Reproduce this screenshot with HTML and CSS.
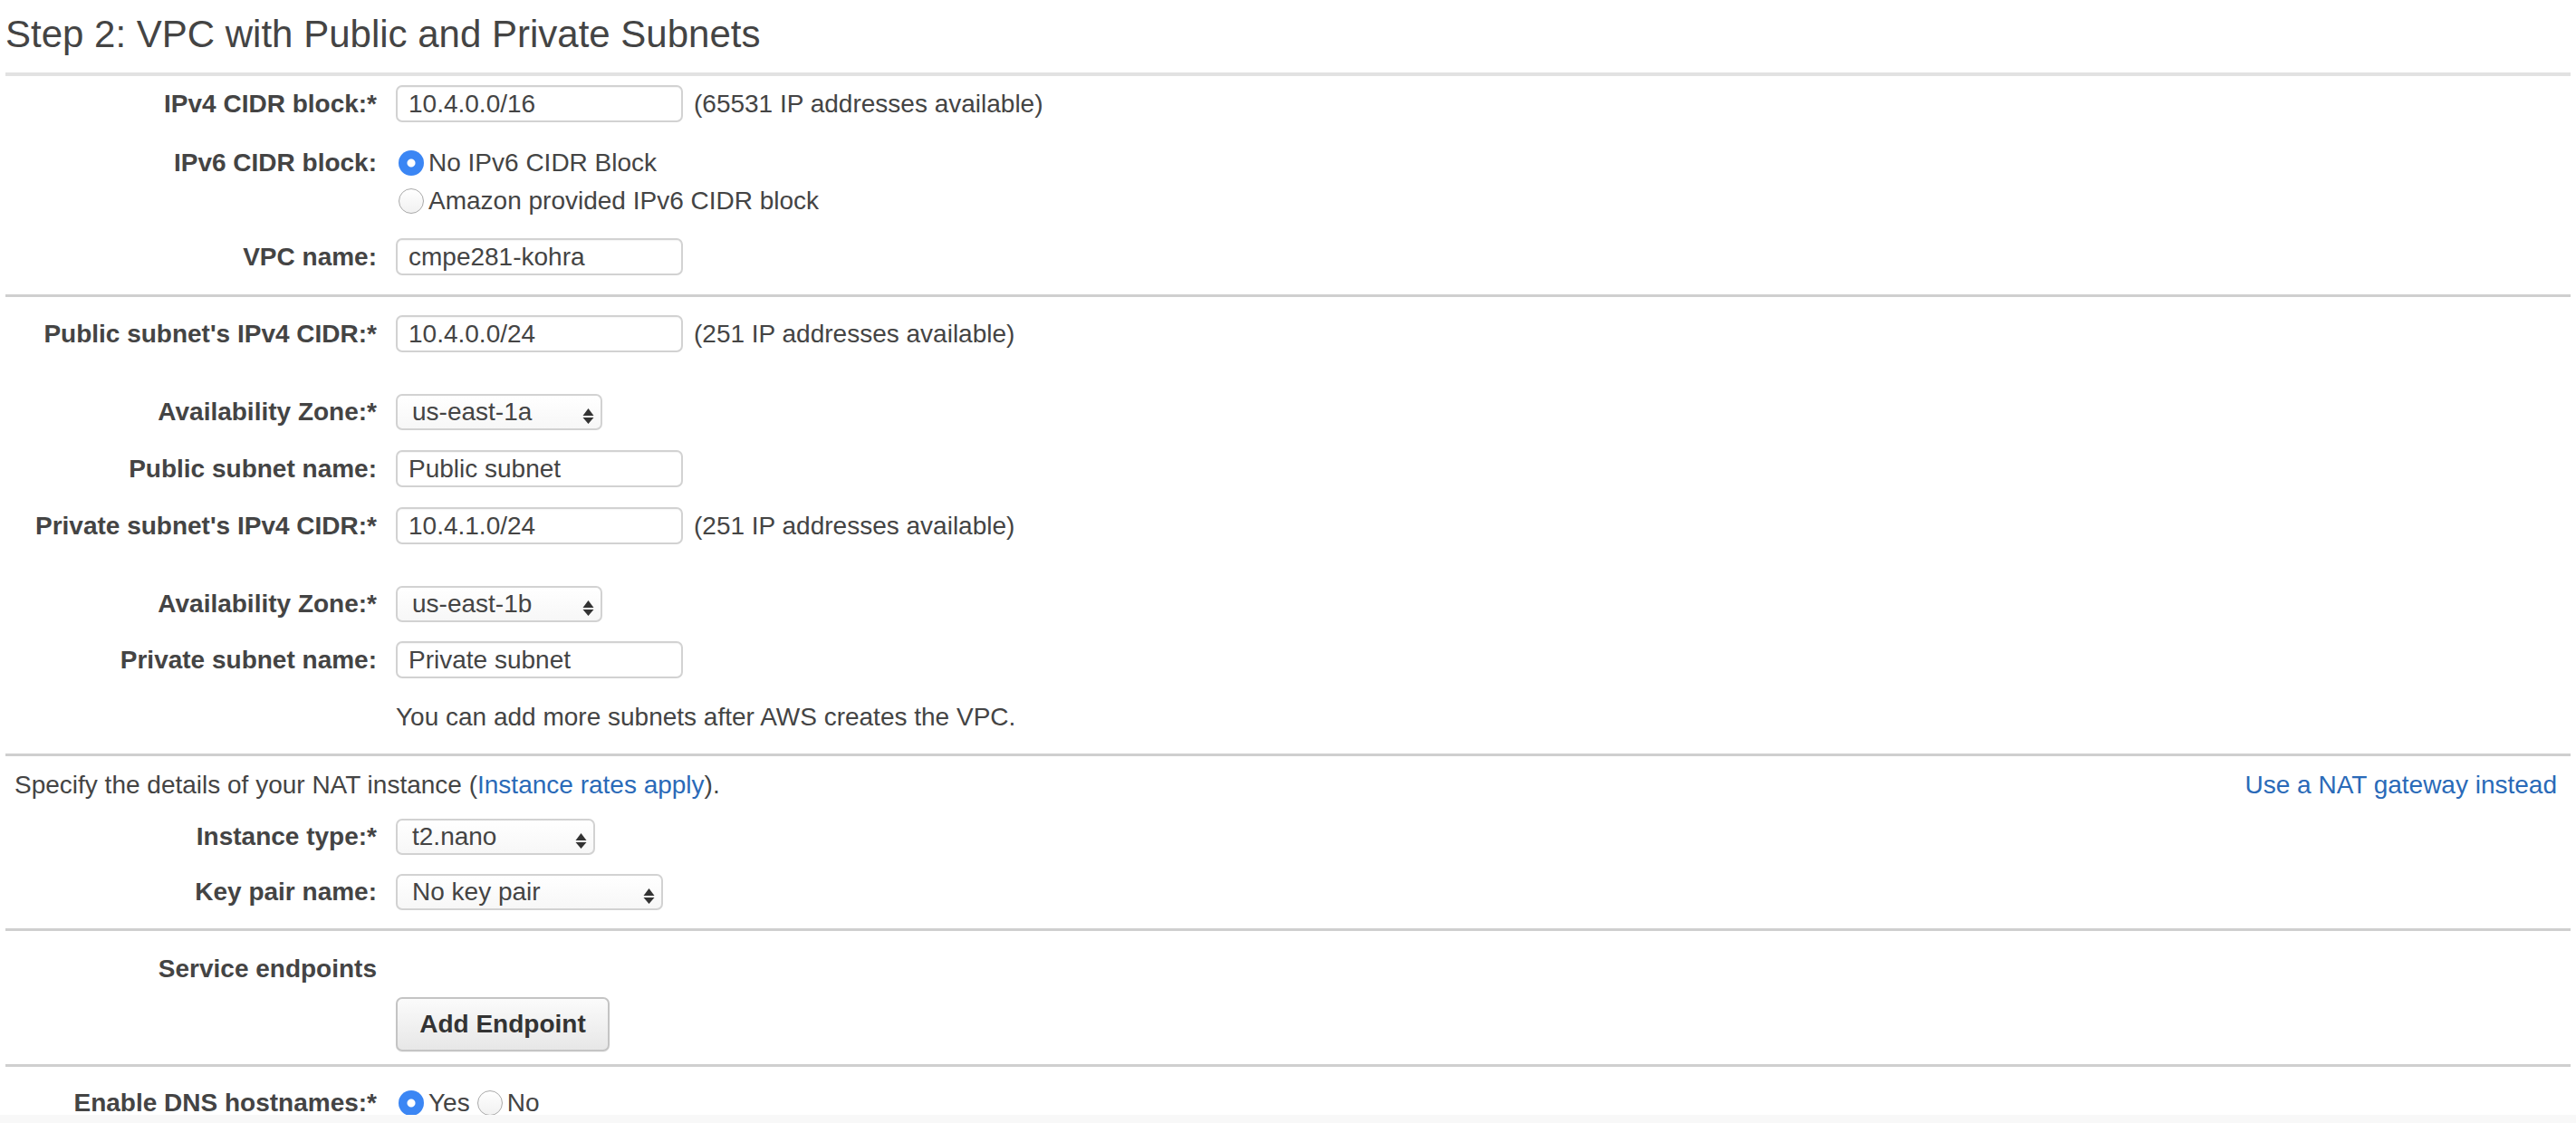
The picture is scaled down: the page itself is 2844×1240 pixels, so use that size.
FILE: index.html
```html
<!DOCTYPE html>
<html lang="en">
<head>
<meta charset="utf-8">
<title>Step 2: VPC with Public and Private Subnets</title>
<link rel="stylesheet" href="styles.css">
</head>
<body>
<div class="page">
  <h1 class="title">Step 2: VPC with Public and Private Subnets</h1>
  <div class="rule rule--first"></div>

  <section class="section section--vpc">
    <div class="row">
      <label class="lbl">IPv4 CIDR block:*</label>
      <div class="field">
        <input class="txt" type="text" value="10.4.0.0/16">
        <span class="hint">(65531 IP addresses available)</span>
      </div>
    </div>
    <div class="row row--top gap-24">
      <label class="lbl">IPv6 CIDR block:</label>
      <div class="radio-list">
        <label class="radio-line"><input class="radio" type="radio" name="ipv6" checked>No IPv6 CIDR Block</label>
        <label class="radio-line"><input class="radio" type="radio" name="ipv6">Amazon provided IPv6 CIDR block</label>
      </div>
    </div>
    <div class="row gap-20">
      <label class="lbl">VPC name:</label>
      <div class="field"><input class="txt" type="text" value="cmpe281-kohra"></div>
    </div>
  </section>
  <div class="rule"></div>

  <section class="section section--subnets">
    <div class="row">
      <label class="lbl">Public subnet's IPv4 CIDR:*</label>
      <div class="field">
        <input class="txt" type="text" value="10.4.0.0/24">
        <span class="hint">(251 IP addresses available)</span>
      </div>
    </div>
    <div class="row gap-45">
      <label class="lbl">Availability Zone:*</label>
      <div class="field">
        <div class="sel sel--az"><span class="sel-val">us-east-1a</span><svg class="sel-arrows" width="13" height="17" viewBox="0 0 13 17"><path d="M0.5 8 L6.5 0 L12.5 8 Z M0.5 10 L12.5 10 L6.5 17 Z" fill="#333"/></svg></div>
      </div>
    </div>
    <div class="row gap-22">
      <label class="lbl">Public subnet name:</label>
      <div class="field"><input class="txt" type="text" value="Public subnet"></div>
    </div>
    <div class="row gap-22">
      <label class="lbl">Private subnet's IPv4 CIDR:*</label>
      <div class="field">
        <input class="txt" type="text" value="10.4.1.0/24">
        <span class="hint">(251 IP addresses available)</span>
      </div>
    </div>
    <div class="row gap-45">
      <label class="lbl">Availability Zone:*</label>
      <div class="field">
        <div class="sel sel--az"><span class="sel-val">us-east-1b</span><svg class="sel-arrows" width="13" height="17" viewBox="0 0 13 17"><path d="M0.5 8 L6.5 0 L12.5 8 Z M0.5 10 L12.5 10 L6.5 17 Z" fill="#333"/></svg></div>
      </div>
    </div>
    <div class="row gap-21">
      <label class="lbl">Private subnet name:</label>
      <div class="field"><input class="txt" type="text" value="Private subnet"></div>
    </div>
    <div class="row row--text gap-22">
      <span class="lbl"></span>
      <p class="note">You can add more subnets after AWS creates the VPC.</p>
    </div>
  </section>
  <div class="rule"></div>

  <section class="section section--nat">
    <div class="nat-head">
      <p class="nat-text">Specify the details of your NAT instance (<a class="link" href="#">Instance rates apply</a>).</p>
      <a class="link" href="#">Use a NAT gateway instead</a>
    </div>
    <div class="row gap-15">
      <label class="lbl">Instance type:*</label>
      <div class="field">
        <div class="sel sel--type"><span class="sel-val">t2.nano</span><svg class="sel-arrows" width="13" height="17" viewBox="0 0 13 17"><path d="M0.5 8 L6.5 0 L12.5 8 Z M0.5 10 L12.5 10 L6.5 17 Z" fill="#333"/></svg></div>
      </div>
    </div>
    <div class="row gap-20">
      <label class="lbl">Key pair name:</label>
      <div class="field">
        <div class="sel sel--key"><span class="sel-val">No key pair</span><svg class="sel-arrows" width="13" height="17" viewBox="0 0 13 17"><path d="M0.5 8 L6.5 0 L12.5 8 Z M0.5 10 L12.5 10 L6.5 17 Z" fill="#333"/></svg></div>
      </div>
    </div>
  </section>
  <div class="rule"></div>

  <section class="section section--endpoints">
    <div class="row row--text">
      <span class="lbl">Service endpoints</span>
      <span></span>
    </div>
    <div class="row gap-10">
      <span class="lbl"></span>
      <div class="field"><button class="btn" type="button">Add Endpoint</button></div>
    </div>
  </section>
  <div class="rule"></div>

  <section class="section section--dns">
    <div class="row row--text">
      <label class="lbl">Enable DNS hostnames:*</label>
      <div class="field">
        <label class="radio-inline"><input class="radio" type="radio" name="dns" checked>Yes</label>
        <label class="radio-inline radio-inline--next"><input class="radio" type="radio" name="dns">No</label>
      </div>
    </div>
  </section>
</div>
<div class="footer-fade"></div>
</body>
</html>
```

FILE: styles.css
```css
html, body {
  margin: 0;
  padding: 0;
  background: #ffffff;
}

body {
  font-family: "Liberation Sans", Arial, Helvetica, sans-serif;
  font-size: 28px;
  color: #444444;
  overflow: hidden;
  height: 1240px;
  position: relative;
}

.page {
  padding: 0 6px;
}

.title {
  margin: 14px 0 18px 0;
  font-size: 42px;
  line-height: 48px;
  font-weight: normal;
  color: #444444;
}

.rule {
  height: 3px;
  background: #cfcfcf;
}

.rule--first {
  height: 4px;
  background: #e2e2e2;
}

.section {
  display: flex;
  flex-direction: column;
}

.section--vpc { padding: 10px 0 21px; }
.section--subnets { padding: 20px 0 19px; }
.section--nat { padding: 11px 0 20px; }
.section--endpoints { padding: 21px 0 14px; }
.section--dns { padding: 19px 0 0; }

.row {
  display: grid;
  grid-template-columns: 410px auto;
  column-gap: 21px;
  align-items: center;
  height: 41px;
}

.row--top { align-items: start; height: auto; }
.row--top .lbl { line-height: 42px; }
.row--text { height: 42px; }
.row--text .lbl { line-height: 42px; }

.gap-10 { margin-top: 10px; height: auto; }
.gap-15 { margin-top: 15px; }
.gap-20 { margin-top: 20px; }
.gap-21 { margin-top: 21px; }
.gap-22 { margin-top: 22px; }
.gap-24 { margin-top: 24px; }
.gap-45 { margin-top: 45px; }

.lbl {
  text-align: right;
  font-weight: bold;
  color: #444444;
  line-height: 41px;
  white-space: nowrap;
}

.field {
  display: flex;
  align-items: center;
}

.txt {
  box-sizing: border-box;
  width: 317px;
  height: 41px;
  margin: 0;
  padding: 0 12px;
  border: 2px solid #d2d2d2;
  border-radius: 7px;
  background: #ffffff;
  box-shadow: inset 0 1px 1px rgba(0, 0, 0, 0.04);
  font-family: inherit;
  font-size: 28px;
  color: #444444;
  outline: none;
}

.hint {
  margin-left: 12px;
  white-space: nowrap;
}

.sel {
  box-sizing: border-box;
  position: relative;
  height: 40px;
  padding-left: 16px;
  border: 2px solid #d2d2d2;
  border-radius: 7px;
  background: linear-gradient(#ffffff, #f7f7f7);
  display: flex;
  align-items: center;
  line-height: 36px;
  color: #444444;
}

.sel--az { width: 228px; }
.sel--type { width: 220px; }
.sel--key { width: 295px; }

.sel-arrows {
  position: absolute;
  right: 7px;
  top: 14px;
}

.radio-list {
  display: flex;
  flex-direction: column;
}

.radio-line, .radio-inline {
  display: flex;
  align-items: center;
  height: 42px;
  line-height: 42px;
  white-space: nowrap;
}

.radio {
  appearance: none;
  -webkit-appearance: none;
  box-sizing: border-box;
  width: 28px;
  height: 28px;
  margin: 0 5px 0 3px;
  border-radius: 50%;
  border: 1px solid #a9a9a9;
  background: linear-gradient(#ffffff, #f1f1f1);
  flex: none;
}

.radio:checked {
  border: none;
  background: radial-gradient(circle, #ffffff 0, #ffffff 4px, #3b86f4 5px, #3b86f4 100%);
}

.radio-inline--next .radio {
  margin-left: 8px;
}

.note {
  margin: 0;
  line-height: 42px;
}

.nat-head {
  display: flex;
  justify-content: space-between;
  align-items: center;
  height: 42px;
  line-height: 42px;
  padding: 0 15px 0 10px;
}

.nat-text {
  margin: 0;
}

.link {
  color: #2a6ab8;
  text-decoration: none;
}

.btn {
  box-sizing: border-box;
  width: 236px;
  height: 60px;
  margin: 0;
  padding: 0;
  border: 2px solid #c4c4c4;
  border-radius: 7px;
  background: linear-gradient(#fbfbfb, #e7e7e7);
  box-shadow: 0 1px 1px rgba(0, 0, 0, 0.06);
  font-family: inherit;
  font-size: 28px;
  font-weight: bold;
  color: #333333;
}

.footer-fade {
  position: absolute;
  left: 0;
  right: 0;
  top: 1231px;
  height: 9px;
  background: #f8f8f8;
}
```
